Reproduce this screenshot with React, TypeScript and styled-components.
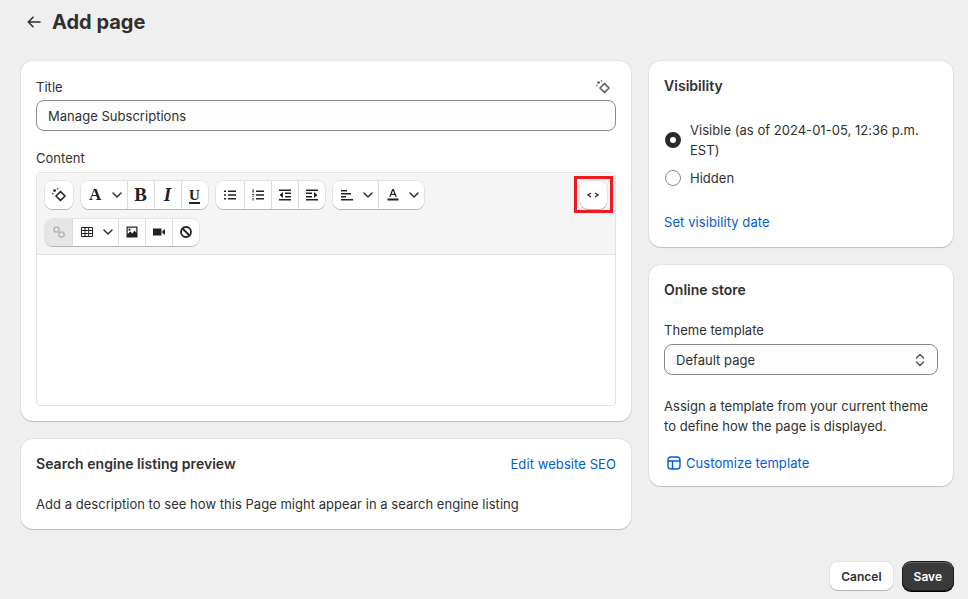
import React from "react";
import styled, { createGlobalStyle } from "styled-components";

const Global = createGlobalStyle`
  html, body { margin: 0; padding: 0; background: #efefef; }
  body { font-family: Inter, "Liberation Sans", sans-serif; font-size: 13px; letter-spacing: .03px; color: #303030; -webkit-font-smoothing: antialiased; }
  * { box-sizing: border-box; }
`;

const Page = styled.div`
  width: 968px;
  height: 599px;
  overflow: hidden;
  padding: 0 14px 0 21px;
  display: flex;
  flex-direction: column;
`;
const Header = styled.header`
  height: 44px;
  margin-bottom: 17px;
  display: flex;
  align-items: center;
  gap: 10px;
  padding-left: 5px;
`;
const BackIcon = styled.svg`
  width: 16px;
  height: 16px;
  color: #303030;
`;
const PageTitle = styled.h1`
  margin: 0;
  font-size: 20px;
  font-weight: 700;
  line-height: 24px;
  letter-spacing: 0;
  color: #303030;
`;
const Columns = styled.div`
  display: grid;
  grid-template-columns: 610px 304px;
  gap: 18px;
  align-items: start;
`;
const Column = styled.div`
  display: flex;
  flex-direction: column;
  gap: 18px;
`;
const Card = styled.section<{ $h: number }>`
  height: ${(p) => p.$h}px;
  background: #fff;
  border-radius: 12px;
  box-shadow: 0 1px 1px rgba(0, 0, 0, 0.16), 0 0 0 1px rgba(0, 0, 0, 0.05);
  padding: 15px 15px 0;
`;
const LabelRow = styled.div`
  display: flex;
  justify-content: space-between;
  align-items: center;
  height: 22px;
  margin-bottom: 2px;
  padding-right: 5px;
`;
const Label = styled.label`
  font-size: 13px;
  line-height: 20px;
  color: #303030;
`;
const SparkIcon = styled.svg<{ $muted?: boolean }>`
  width: 16px;
  height: 16px;
  color: ${(p) => (p.$muted ? "#616161" : "#2a2a2a")};
`;
const Input = styled.div`
  height: 31px;
  border: 1px solid #8a8a8a;
  border-radius: 8px;
  padding: 0 11px;
  display: flex;
  align-items: center;
  justify-content: space-between;
  font-size: 13px;
  color: #303030;
  background: #fdfdfd;
`;
const ContentLabel = styled.div`
  margin-top: 17px;
  height: 24px;
`;
const Editor = styled.div`
  height: 234px;
  border: 1px solid #e3e3e3;
  border-radius: 4px;
  display: flex;
  flex-direction: column;
`;
const Toolbar = styled.div`
  height: 82px;
  flex: none;
  background: #f5f5f5;
  border-bottom: 1px solid #e3e3e3;
  padding: 8px 8px 0;
  display: flex;
  justify-content: space-between;
`;
const ToolRows = styled.div`
  display: flex;
  flex-direction: column;
  gap: 10px;
`;
const ToolRow = styled.div`
  display: flex;
  gap: 8px;
`;
const Group = styled.div`
  display: flex;
  height: 27.5px;
  background: #fff;
  border-radius: 8px;
  box-shadow: 0 1px 0 #b5b5b5, 0 0 0 1px #e3e3e3;
  overflow: hidden;
`;
const Tool = styled.div<{ $w?: number; $off?: boolean }>`
  width: ${(p) => p.$w ?? 27}px;
  display: flex;
  align-items: center;
  justify-content: center;
  background: ${(p) => (p.$off ? "#e6e6e6" : "#fff")};
  color: ${(p) => (p.$off ? "#b5b5b5" : "#222")};
  & + & {
    border-left: 1px solid #dcdcdc;
  }
`;
const DropTool = styled(Tool)`
  justify-content: space-between;
  padding: 0 4px 0 7px;
`;
const Glyph = styled.svg`
  width: 14px;
  height: 14px;
  flex: none;
`;
const Chevron = styled.svg`
  width: 12px;
  height: 12px;
  flex: none;
  color: #303030;
`;
const Letter = styled.span<{ $italic?: boolean; $under?: boolean; $size?: number }>`
  font-family: "Liberation Serif", serif;
  font-weight: 700;
  font-size: ${(p) => p.$size ?? 17}px;
  line-height: 14px;
  margin-left: ${(p) => (p.$size ? "-1px" : "1px")};
  font-style: ${(p) => (p.$italic ? "italic" : "normal")};
  text-decoration: ${(p) => (p.$under ? "underline" : "none")};
  text-decoration-thickness: 1.5px;
  text-underline-offset: 1.5px;
`;
const CodeWrap = styled.div`
  position: relative;
  height: 27.5px;
`;
const CodeBtn = styled(Group)`
  width: 27.5px;
  align-items: center;
  justify-content: center;
`;
const CodeText = styled.svg`
  width: 14px;
  height: 10px;
  color: #303030;
`;
const RedMark = styled.div`
  position: absolute;
  left: -6px;
  right: -6px;
  top: -5px;
  bottom: -4px;
  border: 3.5px solid #f01a1f;
`;
const SectionHead = styled.div`
  display: flex;
  justify-content: space-between;
  align-items: center;
  height: 20px;
`;
const CardTitle = styled.h2`
  margin: 0;
  font-size: 14px;
  line-height: 20px;
  font-weight: 600;
  color: #303030;
`;
const Link = styled.a`
  color: #005bd3;
  font-size: 13px;
  line-height: 20px;
  letter-spacing: .08px;
  display: inline-flex;
  align-items: center;
  gap: 5px;
`;
const Para = styled.p<{ $top: number }>`
  margin: ${(p) => p.$top}px 0 0;
  font-size: 13px;
  line-height: 20px;
  color: #303030;
`;
const RadioList = styled.div`
  margin-top: 24px;
  display: flex;
  flex-direction: column;
  gap: 8px;
`;
const RadioRow = styled.div`
  display: flex;
  align-items: center;
  gap: 9px;
  line-height: 20px;
  padding-left: 1px;
`;
const Radio = styled.span<{ $on?: boolean }>`
  width: 16px;
  height: 16px;
  flex: none;
  border-radius: 50%;
  background: #fff;
  border: ${(p) => (p.$on ? "5.5px solid #2a2a2a" : "1px solid #8a8a8a")};
`;
const VisLink = styled.div`
  margin-top: 24px;
`;
const TemplateLabel = styled.div`
  margin-top: 20px;
  margin-bottom: 4px;
`;
const SelectIcon = styled.svg`
  width: 14px;
  height: 16px;
  margin-right: -1px;
  color: #4a4a4a;
`;
const TemplateLink = styled.div`
  margin-top: 17px;
  padding-left: 3px;
`;
const LinkIcon = styled.svg`
  width: 14px;
  height: 14px;
`;
const Footer = styled.footer`
  margin-top: 33px;
  margin-right: 1px;
  display: flex;
  justify-content: flex-end;
  gap: 10px;
`;
const Button = styled.button<{ $dark?: boolean }>`
  height: 28px;
  padding: 0 11px;
  border: none;
  border-radius: 8px;
  font: 600 12px Inter, "Liberation Sans", sans-serif;
  color: ${(p) => (p.$dark ? "#fff" : "#303030")};
  background: ${(p) => (p.$dark ? "#3a3a3a" : "#fff")};
  box-shadow: ${(p) =>
    p.$dark
      ? "inset 0 1px 0 rgba(255,255,255,.2), 0 0 0 1px #1a1a1a, 0 1px 0 1px #000"
      : "0 1px 0 #b5b5b5, 0 0 0 1px #e3e3e3"};
`;

const Spark = ({ muted }: { muted?: boolean }) => (
  <SparkIcon $muted={muted} viewBox="0 0 16 16" fill="none">
    <path d="M9.500 4.500 14 9l-4.500 4.500L5 9z" stroke="currentColor" strokeWidth="1.700" strokeLinejoin="round" />
    <circle cx="3.600" cy="3.600" r="1.400" fill="currentColor" />
    <circle cx="6.600" cy="1.800" r=".8" fill="currentColor" />
    <circle cx="1.800" cy="6.600" r=".8" fill="currentColor" />
  </SparkIcon>
);
const Down = () => (
  <Chevron viewBox="0 0 12 12" fill="none">
    <path d="M2 4l4 4 4-4" stroke="currentColor" strokeWidth="1.500" strokeLinecap="round" strokeLinejoin="round" />
  </Chevron>
);
const Bars = ({ d }: { d: string }) => (
  <Glyph viewBox="0 0 14 14" fill="currentColor">
    <path d={d} />
  </Glyph>
);

export default function App() {
  return (
    <Page>
      <Global />
      <Header>
        <BackIcon viewBox="0 0 16 16" fill="none">
          <path d="M14 8H2.500M7 3.200 2.300 8 7 12.800" stroke="currentColor" strokeWidth="1.600" strokeLinecap="round" strokeLinejoin="round" />
        </BackIcon>
        <PageTitle>Add page</PageTitle>
      </Header>
      <Columns>
        <Column>
          <Card $h={360}>
            <LabelRow>
              <Label>Title</Label>
              <Spark muted />
            </LabelRow>
            <Input>Manage Subscriptions</Input>
            <ContentLabel>
              <Label>Content</Label>
            </ContentLabel>
            <Editor>
              <Toolbar>
                <ToolRows>
                  <ToolRow>
                    <Group>
                      <Tool $w={28}><Spark /></Tool>
                    </Group>
                    <Group>
                      <DropTool $w={46}><Letter>A</Letter><Down /></DropTool>
                      <Tool><Letter $size={19}>B</Letter></Tool>
                      <Tool><Letter $italic $size={19}>I</Letter></Tool>
                      <Tool><Letter $under $size={15}>U</Letter></Tool>
                    </Group>
                    <Group>
                      <Tool $w={28}><Bars d="M5 2.500h8v1.500H5zM5 6.200h8v1.600H5zM5 10h8v1.500H5zM1 2.500h2V4H1zM1 6.200h2v1.600H1zM1 10h2v1.500H1z" /></Tool>
                      <Tool><Bars d="M5 2.500h8v1.500H5zM5 6.200h8v1.600H5zM5 10h8v1.500H5zM1.500 1.500h1.200v3H1.500zM1 6.200h2.200v.8H1zM1 7.800h2.200v.8H1zM1 10h2.200v.6H1zM1 11.500h2.200v.8H1z" /></Tool>
                      <Tool><Bars d="M1 1.500h12V3H1zM1 11h12v1.500H1zM7 4.500h6V6H7zM7 8h6v1.500H7zM5 4v6L1.500 7z" /></Tool>
                      <Tool><Bars d="M1 1.500h12V3H1zM1 11h12v1.500H1zM1 4.500h6V6H1zM1 8h6v1.500H1zM9 4v6l3.500-3z" /></Tool>
                    </Group>
                    <Group>
                      <DropTool $w={45}><Bars d="M1 2h6v1.500H1zM1 5h10v1.500H1zM1 8h5v1.500H1zM1 11h12v1.500H1z" /><Down /></DropTool>
                      <DropTool $w={46}>
                        <Glyph viewBox="0 0 14 14" fill="currentColor">
                          <path d="M6.200 1h1.600l3 7.800H9.300l-.6-1.800H5.300l-.6 1.800H3.200zM5.700 5.800h2.600L7 2.600zM1.500 10.500h11V12.500h-11z" />
                        </Glyph>
                        <Down />
                      </DropTool>
                    </Group>
                  </ToolRow>
                  <ToolRow>
                    <Group>
                      <Tool $off>
                        <Glyph viewBox="0 0 14 14" fill="none" stroke="currentColor" strokeWidth="1.500">
                          <circle cx="4.500" cy="4.500" r="2.600" />
                          <circle cx="9.500" cy="9.500" r="2.600" />
                        </Glyph>
                      </Tool>
                      <DropTool $w={46}>
                        <Glyph viewBox="0 0 14 14" fill="none" stroke="currentColor" strokeWidth="1">
                          <path d="M1.500 2.500h11v9h-11zM1.500 5.500h11M1.500 8.500h11M5 2.500v9M8.700 2.500v9" />
                        </Glyph>
                        <Down />
                      </DropTool>
                      <Tool>
                        <Glyph viewBox="0 0 14 14">
                          <path fillRule="evenodd" fill="currentColor" d="M1.500 1.500h11v11h-11zM2.700 2.700v6.400l2.600-2.600 2 2 2.200-3 1.800 2.300V2.700zM4.500 3.600a1.100 1.100 0 1 1 0 2.200 1.100 1.100 0 0 1 0-2.200z" />
                        </Glyph>
                      </Tool>
                      <Tool>
                        <Bars d="M1 3.500h8.500v7H1zM10.300 6.200 13 4v6l-2.700-2.200z" />
                      </Tool>
                      <Tool>
                        <Glyph viewBox="0 0 14 14" fill="none" stroke="currentColor" strokeWidth="1.800">
                          <circle cx="7" cy="7" r="5" />
                          <path d="M3.500 3.500l7 7" />
                        </Glyph>
                      </Tool>
                    </Group>
                  </ToolRow>
                </ToolRows>
                <CodeWrap>
                  <CodeBtn>
                    <CodeText viewBox="0 0 14 10" fill="none" stroke="currentColor" strokeWidth="1.400">
                      <path d="M5 3 2 5l3 2M9 3l3 2-3 2" />
                    </CodeText>
                  </CodeBtn>
                  <RedMark />
                </CodeWrap>
              </Toolbar>
            </Editor>
          </Card>
          <Card $h={90}>
            <SectionHead>
              <CardTitle>Search engine listing preview</CardTitle>
              <Link>Edit website SEO</Link>
            </SectionHead>
            <Para $top={20}>Add a description to see how this Page might appear in a search engine listing</Para>
          </Card>
        </Column>
        <Column>
          <Card $h={186}>
            <SectionHead>
              <CardTitle>Visibility</CardTitle>
            </SectionHead>
            <RadioList>
              <RadioRow>
                <Radio $on />
                <span>Visible (as of 2024-01-05, 12:36 p.m.<br />EST)</span>
              </RadioRow>
              <RadioRow>
                <Radio />
                <span>Hidden</span>
              </RadioRow>
            </RadioList>
            <VisLink>
              <Link>Set visibility date</Link>
            </VisLink>
          </Card>
          <Card $h={221}>
            <SectionHead>
              <CardTitle>Online store</CardTitle>
            </SectionHead>
            <TemplateLabel>
              <Label>Theme template</Label>
            </TemplateLabel>
            <Input>
              Default page
              <SelectIcon viewBox="0 0 14 16" fill="none">
                <path d="M3.500 6 7 2.500 10.500 6M3.500 10 7 13.500 10.500 10" stroke="currentColor" strokeWidth="1.300" strokeLinecap="round" strokeLinejoin="round" />
              </SelectIcon>
            </Input>
            <Para $top={21}>
              Assign a template from your current theme
              <br />
              to define how the page is displayed.
            </Para>
            <TemplateLink>
              <Link>
                <LinkIcon viewBox="0 0 14 14" fill="none" stroke="currentColor" strokeWidth="1.400">
                  <rect x="1" y="1" width="12" height="12" rx="3" />
                  <path d="M1 5h12M5.500 5v8" />
                </LinkIcon>
                Customize template
              </Link>
            </TemplateLink>
          </Card>
        </Column>
      </Columns>
      <Footer>
        <Button>Cancel</Button>
        <Button $dark>Save</Button>
      </Footer>
    </Page>
  );
}
